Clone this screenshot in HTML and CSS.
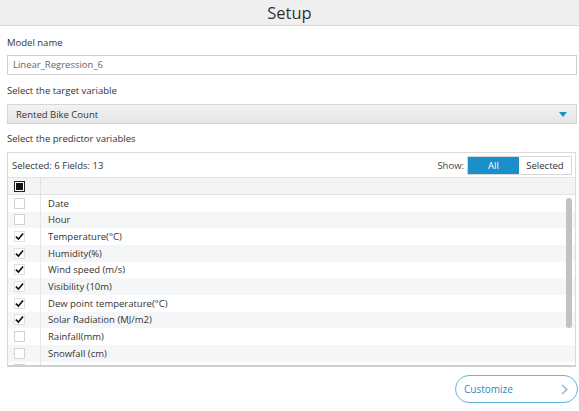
FILE: index.html
```html
<!DOCTYPE html>
<html>
<head>
<meta charset="utf-8">
<link rel="stylesheet" href="styles.css">
</head>
<body>
<div class="header">Setup</div>
<div class="content">
  <div class="label first">Model name</div>
  <div class="input">Linear_Regression_6</div>
  <div class="label second">Select the target variable</div>
  <div class="select">
    <span>Rented Bike Count</span>
    <svg class="caret" width="8" height="5" viewBox="0 0 8 5"><path d="M0 0H8L4 5Z" fill="#1a8fc9"/></svg>
  </div>
  <div class="label third">Select the predictor variables</div>
  <div class="table">
    <div class="toolbar">
      <span>Selected: 6 Fields: 13</span>
      <div class="show">
        <span class="show-label">Show:</span>
        <div class="seg">
          <span class="seg-btn on">All</span>
          <span class="seg-btn">Selected</span>
        </div>
      </div>
    </div>
    <div class="thead">
      <div class="cbcell"><span class="cb cb-all"><span class="fill"></span></span></div>
      <div class="namecell"></div>
    </div>
    <div class="tbody">
      <div class="row"><div class="cbcell"><span class="cb"></span></div><div class="namecell">Date</div></div>
      <div class="row alt"><div class="cbcell"><span class="cb"></span></div><div class="namecell">Hour</div></div>
      <div class="row"><div class="cbcell"><span class="cb checked"><svg width="10" height="9" viewBox="0 0 10 9"><path d="M1 4.6L3.8 7.4L9 1.2" fill="none" stroke="#111" stroke-width="1.8"/></svg></span></div><div class="namecell">Temperature(°C)</div></div>
      <div class="row alt"><div class="cbcell"><span class="cb checked"><svg width="10" height="9" viewBox="0 0 10 9"><path d="M1 4.6L3.8 7.4L9 1.2" fill="none" stroke="#111" stroke-width="1.8"/></svg></span></div><div class="namecell">Humidity(%)</div></div>
      <div class="row"><div class="cbcell"><span class="cb checked"><svg width="10" height="9" viewBox="0 0 10 9"><path d="M1 4.6L3.8 7.4L9 1.2" fill="none" stroke="#111" stroke-width="1.8"/></svg></span></div><div class="namecell">Wind speed (m/s)</div></div>
      <div class="row alt"><div class="cbcell"><span class="cb checked"><svg width="10" height="9" viewBox="0 0 10 9"><path d="M1 4.6L3.8 7.4L9 1.2" fill="none" stroke="#111" stroke-width="1.8"/></svg></span></div><div class="namecell">Visibility (10m)</div></div>
      <div class="row"><div class="cbcell"><span class="cb checked"><svg width="10" height="9" viewBox="0 0 10 9"><path d="M1 4.6L3.8 7.4L9 1.2" fill="none" stroke="#111" stroke-width="1.8"/></svg></span></div><div class="namecell">Dew point temperature(°C)</div></div>
      <div class="row alt"><div class="cbcell"><span class="cb checked"><svg width="10" height="9" viewBox="0 0 10 9"><path d="M1 4.6L3.8 7.4L9 1.2" fill="none" stroke="#111" stroke-width="1.8"/></svg></span></div><div class="namecell">Solar Radiation (MJ/m2)</div></div>
      <div class="row"><div class="cbcell"><span class="cb"></span></div><div class="namecell">Rainfall(mm)</div></div>
      <div class="row alt"><div class="cbcell"><span class="cb"></span></div><div class="namecell">Snowfall (cm)</div></div>
      <div class="row"><div class="cbcell"><span class="cb"></span></div><div class="namecell">Seasons</div></div>
      <div class="scrollbar"></div>
    </div>
  </div>
  <div class="footer">
    <div class="customize">
      <span>Customize</span>
      <svg width="7" height="11" viewBox="0 0 7 11"><path d="M1 0.8L5.8 5.5L1 10.2" fill="none" stroke="#6aaed6" stroke-width="1.1"/></svg>
    </div>
  </div>
</div>
</body>
</html>
```

FILE: styles.css
```css
* { box-sizing: border-box; }
html, body { margin: 0; padding: 0; background: #ffffff; }
body {
  font-family: "Open Sans", "Noto Sans", "Liberation Sans", sans-serif;
  font-size: 9.5px;
  color: #333333;
  width: 579px;
  height: 411px;
  overflow: hidden;
}
.header {
  height: 26px;
  background: #efefef;
  border-bottom: 1px solid #d8d8d8;
  text-align: center;
  font-size: 16.5px;
  line-height: 25px;
  color: #333333;
}
.content {
  padding: 0 2px 0 7px;
}
.label {
  line-height: 14px;
  margin-bottom: 6px;
}
.label.first { margin-top: 10px; margin-bottom: 5px; }
.label.second { margin-top: 9px; }
.label.third { margin-top: 8px; }
.input {
  height: 20px;
  border: 1px solid #cfcfcf;
  padding-left: 5px;
  line-height: 18px;
  color: #666666;
}
.select {
  height: 20px;
  border: 1px solid #d6d6d6;
  background: linear-gradient(#f3f3f3, #e6e6e6);
  padding: 0 9px 0 8px;
  display: flex;
  align-items: center;
  justify-content: space-between;
  color: #333333;
}
.table {
  margin-right: 1px;
  height: 215px;
  border: 1px solid #dadada;
  border-bottom: 2px solid #cfcfcf;
  display: flex;
  flex-direction: column;
  overflow: hidden;
}
.toolbar {
  height: 25px;
  flex: none;
  display: flex;
  align-items: center;
  justify-content: space-between;
  padding: 0 3px 0 4px;
  border-bottom: 1px solid #e2e2e2;
}
.show { display: flex; align-items: center; }
.show-label { margin-right: 3px; color: #444; }
.seg {
  display: flex;
  border: 1px solid #d6d6d6;
  height: 19px;
}
.seg-btn {
  display: flex;
  align-items: center;
  justify-content: center;
  width: 52px;
  color: #333;
}
.seg-btn.on {
  background: #1a8fc9;
  color: #ffffff;
  width: 51px;
}
.thead {
  height: 17px;
  flex: none;
  display: flex;
  background: #f4f4f4;
  border-bottom: 1px solid #e2e2e2;
}
.cbcell {
  width: 33px;
  flex: none;
  display: flex;
  align-items: center;
  padding-left: 6px;
  border-right: 1px solid #e2e2e2;
}
.namecell {
  flex: 1;
  padding-left: 7px;
  display: flex;
  align-items: center;
}
.cb {
  width: 11px;
  height: 11px;
  border: 1px solid #d2d2d2;
  background: #fff;
  display: flex;
  align-items: center;
  justify-content: center;
}
.cb.checked { border-color: #e0e0e0; }
.cb-all {
  border: 1px solid #222;
}
.cb-all .fill {
  width: 7px;
  height: 7px;
  background: #111;
}
.tbody {
  position: relative;
  flex: 1;
  overflow: hidden;
}
.row {
  height: 16.67px;
  display: flex;
}
.row.alt { background: #f5f6f7; }
.row .cbcell { border-right: 1px solid #e6e6e6; }
.scrollbar {
  position: absolute;
  right: 3px;
  top: 3px;
  width: 6px;
  height: 130px;
  border-radius: 3px;
  background: #c2c2c2;
}
.footer {
  display: flex;
  justify-content: flex-end;
  margin-top: 8px;
  margin-right: -1px;
}
.customize {
  width: 123px;
  height: 28px;
  border: 1.5px solid #62b6e2;
  border-radius: 14px;
  display: flex;
  align-items: center;
  justify-content: space-between;
  padding: 0 9px 0 8px;
  color: #2e8bc4;
  font-size: 10px;
}
```
